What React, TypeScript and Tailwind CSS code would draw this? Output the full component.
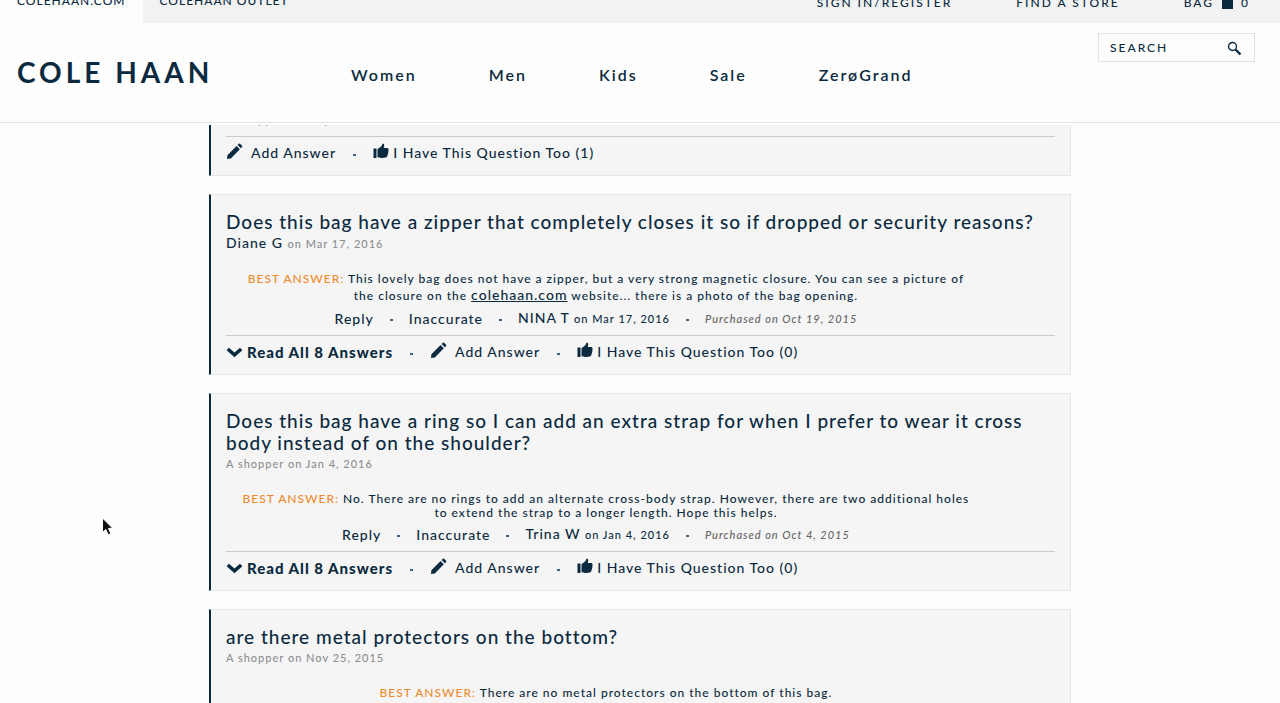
import type { ReactNode } from "react";

interface Question {
  id: number;
  title: string;
  author?: string;
  asked: string;
  answer?: ReactNode;
  replier?: string;
  replied?: string;
  purchased?: string;
  answers?: number;
  votes: number;
}

const NAV = ["Women", "Men", "Kids", "Sale", "ZerøGrand"];

const QUESTIONS: Question[] = [
  { id: 1, title: "", asked: "A shopper on May 4, 2016", votes: 1 },
  {
    id: 2,
    title: "Does this bag have a zipper that completely closes it so if dropped or security reasons?",
    author: "Diane G",
    asked: "on Mar 17, 2016",
    answer: (
      <>
        This lovely bag does not have a zipper, but a very strong magnetic closure. You can see a picture of
        the closure on the <a href="#colehaan" className="text-sm leading-[18px] underline">colehaan.com</a> website... there is a photo of the bag opening.
      </>
    ),
    replier: "NINA T",
    replied: "on Mar 17, 2016",
    purchased: "Purchased on Oct 19, 2015",
    answers: 8,
    votes: 0,
  },
  {
    id: 3,
    title: "Does this bag have a ring so I can add an extra strap for when I prefer to wear it cross body instead of on the shoulder?",
    asked: "A shopper on Jan 4, 2016",
    answer: "No. There are no rings to add an alternate cross-body strap. However, there are two additional holes to extend the strap to a longer length. Hope this helps.",
    replier: "Trina W",
    replied: "on Jan 4, 2016",
    purchased: "Purchased on Oct 4, 2015",
    answers: 8,
    votes: 0,
  },
  {
    id: 4,
    title: "are there metal protectors on the bottom?",
    asked: "A shopper on Nov 25, 2015",
    answer: "There are no metal protectors on the bottom of this bag.",
    replier: "Trina W",
    replied: "on Nov 25, 2015",
    purchased: "Purchased on Oct 4, 2015",
    answers: 2,
    votes: 0,
  },
];

function Dot() {
  return <span className="mt-[3px] h-[2px] w-[3px] shrink-0 bg-[#3d6186]" />;
}

function Chevron() {
  return (
    <svg width="17" height="12" viewBox="0 0 17 12" fill="none" stroke="currentColor" strokeWidth="3.6">
      <path d="M1.800 3 8.500 8.800l6.700-5.800" />
    </svg>
  );
}

function Pencil() {
  return (
    <svg width="17" height="17" viewBox="0 0 17 17" fill="currentColor" className="mb-1">
      <path d="M1 16l.4-3.800L10.600 3l3.200 3.200-9 9.300zM11.600 2l1.300-1.300q.6-.5 1.200 0l2 2q.5.6 0 1.200L14.800 5.200z" />
    </svg>
  );
}

function Thumb() {
  return (
    <svg width="16" height="16" viewBox="0 0 16 16" fill="currentColor" className="mb-1">
      <path d="M.5 5.500h3V15h-3zM4.500 6.200 8.600 3 9.300.9Q9.700.3 10.400.7q1.200.8.8 2.300l-.5 2h3.600q1.400.2 1.200 1.700.3.900-.2 1.700.3 1-.3 1.900.2 1.200-.5 2-.1 1.900-1.700 2.300-3.300.7-5.700.2L4.500 14z" />
    </svg>
  );
}

function Magnifier() {
  return (
    <svg width="15" height="15" viewBox="0 0 15 15" fill="none" stroke="currentColor">
      <circle cx="5.500" cy="5.500" r="4" strokeWidth="1.400" />
      <path d="m8.500 8.500 5 5" strokeWidth="2.400" />
    </svg>
  );
}

function QuestionCard({ q }: { q: Question }) {
  return (
    <article className="border border-l-2 border-[#e6e6e6] border-l-[#0b2a40] bg-[#f5f5f5] px-[15px] pt-4 pb-[13px]">
      {q.title && <h2 className="text-[19px] leading-[22px] tracking-[1px]">{q.title}</h2>}
      <p className="text-[11px] leading-5 tracking-[1px] text-[#8c8f92]">
        {q.author && <span className="text-sm leading-5 text-[#0b2a40]">{q.author} </span>}
        {q.asked}
      </p>
      {q.answer && (
        <div className="mt-[18px] w-11/12 text-center">
          <p className="px-3 text-xs leading-[14px] tracking-[1px]">
            <span className="text-[#ee8b2e]">BEST ANSWER: </span>
            {q.answer}
          </p>
          <div className="mt-1 mr-5 flex items-center justify-center gap-4 text-sm leading-5 tracking-[1px]">
            <button>Reply</button>
            <Dot />
            <button>Inaccurate</button>
            <Dot />
            <span>{q.replier} <span className="text-[11px]">{q.replied}</span></span>
            <Dot />
            <em className="text-[11px] text-[#666]">{q.purchased}</em>
          </div>
        </div>
      )}
      <div className="mt-[6px] flex h-[26px] items-center gap-[17px] border-t border-[#c8cbcc] pt-[7px] text-sm leading-5 tracking-[1px]">
        {q.answers && (
          <>
            <button className="flex items-center gap-1 text-[15px] font-black"><Chevron />Read All {q.answers} Answers</button>
            <Dot />
          </>
        )}
        <button className="flex items-center gap-2"><Pencil />Add Answer</button>
        <Dot />
        <button className="flex items-center gap-1"><Thumb />I Have This Question Too ({q.votes})</button>
      </div>
    </article>
  );
}

function Header() {
  return (
    <header className="relative z-10 shrink-0 border-b border-[#e4e4e4] bg-[#fdfdfd]">
      <div className="flex h-[23px] flex-col justify-end overflow-hidden bg-[#f2f2f2]">
        <div className="flex h-11 shrink-0 items-stretch justify-between">
          <div className="flex text-xs tracking-[1px]">
            <a href="#home" className="flex items-center bg-[#fdfdfd] px-[17px]">COLEHAAN.COM</a>
            <a href="#outlet" className="flex items-center px-[17px]">COLEHAAN OUTLET</a>
          </div>
          <div className="flex items-center gap-16 pt-1 pr-[30px] text-xs tracking-[2px]">
            <a href="#signin">SIGN IN/REGISTER</a>
            <a href="#stores">FIND A STORE</a>
            <a href="#bag" className="flex items-center gap-2">
              BAG
              <svg width="11" height="16" viewBox="0 0 11 16" fill="currentColor">
                <path d="M0 4h11v10H0zM3 4V2.500a2.500 2.500 0 0 1 5 0V4H7V2.500a1.500 1.500 0 0 0-3 0V4z" />
              </svg>
              0
            </a>
          </div>
        </div>
      </div>
      <div className="flex h-[99px] items-start pl-[17px] pr-[25px]">
        <a href="#home" className="mt-[31px] w-[334px] text-[28px] leading-9 font-bold tracking-[4px]">COLE HAAN</a>
        <nav className="mt-10 flex gap-[72px] text-base leading-6 font-semibold tracking-[2px]">
          {NAV.map(n => <a key={n} href="#shop">{n}</a>)}
        </nav>
        <form className="mt-[10px] ml-auto flex h-[29px] w-[157px] items-center border border-[#e2e2e2] pt-px pr-3 pl-[11px]">
          <input
            aria-label="Search"
            placeholder="SEARCH"
            className="w-full min-w-0 text-xs tracking-[2px] outline-none placeholder:text-[#0b2a40]"
          />
          <button type="button" aria-label="Submit search"><Magnifier /></button>
        </form>
      </div>
    </header>
  );
}

export default function App() {
  return (
    <div className="relative flex h-screen flex-col overflow-hidden bg-[#fdfdfd] font-['Lato',sans-serif] font-medium text-[#0b2a40]">
      <Header />
      <main className="mt-[2px] min-h-0 flex-1 overflow-hidden">
        <div className="mx-auto -mt-8 flex max-w-[862px] flex-col gap-[18px]">
          {QUESTIONS.map(q => <QuestionCard key={q.id} q={q} />)}
        </div>
      </main>
      <svg className="absolute top-[517px] left-[101px]" width="13" height="20" viewBox="0 0 13 20">
        <path d="M1.500 1v14.500l3.300-3.100 2.300 5.400 2.700-1.200-2.300-5.200h4.400z" fill="#111" stroke="#fff" strokeWidth="1" />
      </svg>
    </div>
  );
}
